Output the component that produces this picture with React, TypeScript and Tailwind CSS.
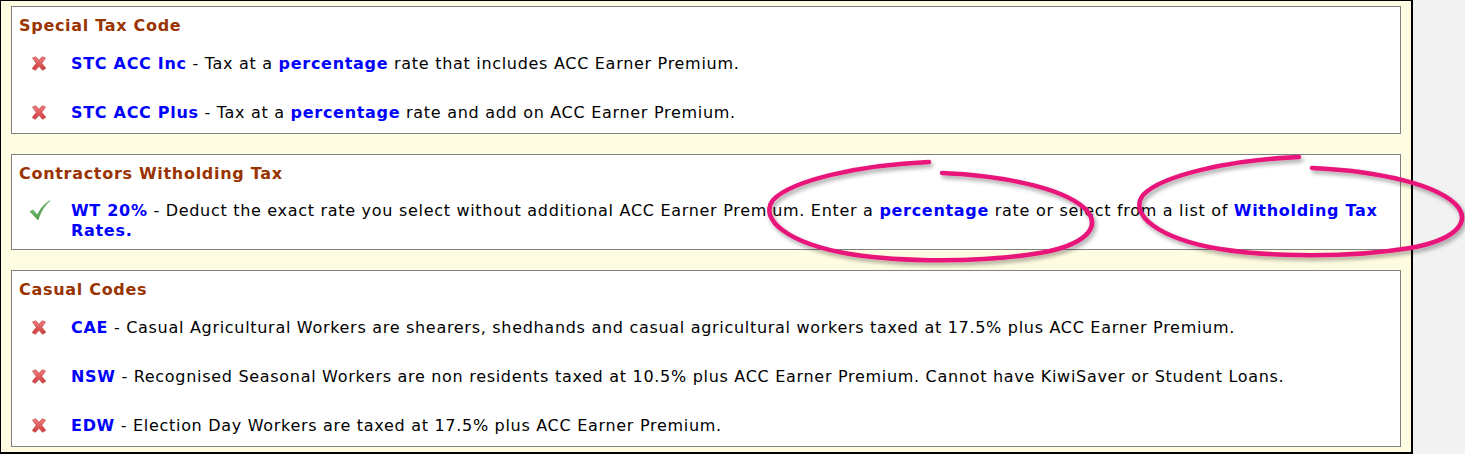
import React from "react";

const font = { fontFamily: '"DejaVu Sans", Verdana, sans-serif' };

function XIcon() {
  return (
    <svg width="16" height="15" viewBox="0 0 16 15">
      <defs>
        <linearGradient id="xg" x1="0" y1="0" x2="0" y2="1">
          <stop offset="0" stopColor="#f27f7f" />
          <stop offset="1" stopColor="#cc3c3c" />
        </linearGradient>
      </defs>
      <path
        d="M1.5 2 L4.8 0.8 L8 4.2 L11.2 0.8 L14.5 2 L10.8 7.3 L14.8 12.3 L11.6 14.3 L8 10.3 L4.4 14.3 L1.2 12.6 L5.2 7.3 Z"
        fill="url(#xg)"
        stroke="#b83434"
        strokeWidth="0.6"
        strokeLinejoin="round"
      />
    </svg>
  );
}

function CheckIcon() {
  return (
    <svg width="22" height="21" viewBox="0 0 22 21">
      <defs>
        <linearGradient id="cg" x1="0" y1="0" x2="1" y2="1">
          <stop offset="0" stopColor="#8fd08a" />
          <stop offset="1" stopColor="#2f8a2f" />
        </linearGradient>
      </defs>
      <path
        d="M1 11.5 L4 10 L8.5 15 C11 9 15 4 21 0.5 C16 5 12 11 9 20 Z"
        fill="url(#cg)"
        stroke="#3d8b3d"
        strokeWidth="0.5"
        strokeLinejoin="round"
      />
    </svg>
  );
}

function Row({ ok, children, className = "" }: { ok?: boolean; children: React.ReactNode; className?: string }) {
  return (
    <div className={"flex " + className}>
      <div className="w-[52px] shrink-0 flex">
        {ok ? (
          <div className="ml-[10px] -mt-[1px]">
            <CheckIcon />
          </div>
        ) : (
          <div className="ml-[12px] mt-[2px]">
            <XIcon />
          </div>
        )}
      </div>
      <p className="pr-[10px]">{children}</p>
    </div>
  );
}

const B = ({ children }: { children: React.ReactNode }) => (
  <b className="font-bold text-[#0000ff]">{children}</b>
);

function Heading({ children }: { children: React.ReactNode }) {
  return <div className="font-bold text-[#993300] leading-5">{children}</div>;
}

const circlePath =
  "M929 162 C860 165 792 180 773 200 C758 220 790 244 850 254 C900 262 980 263 1040 253 C1085 245 1100 228 1088 212 C1070 190 1010 176 942 173";

export default function App() {
  return (
    <div className="relative flex w-[1465px] h-[454px] bg-[#f2f2f2] overflow-hidden" style={font}>
      <div className="w-[1413px] h-[454px] bg-[#fffde1] border-l border-t border-r-2 border-b-2 border-black px-[10px] pt-[5px] flex flex-col gap-[20px] text-[16px] leading-5 tracking-[0.7px] text-black">
        <div className="bg-white border border-[#808080] pl-[7px] pt-[9px] h-[128px]">
          <Heading>Special Tax Code</Heading>
          <Row className="mt-[18px]">
            <B>STC ACC Inc</B> - Tax at a <B>percentage</B> rate that includes ACC Earner Premium.
          </Row>
          <Row className="mt-[29px]">
            <B>STC ACC Plus</B> - Tax at a <B>percentage</B> rate and add on ACC Earner Premium.
          </Row>
        </div>
        <div className="bg-white border border-[#808080] pl-[7px] pt-[9px] h-[96px]">
          <Heading>Contractors Witholding Tax</Heading>
          <Row ok className="mt-[17px]">
            <B>WT 20%</B> - Deduct the exact rate you select without additional ACC Earner Premium. Enter a{" "}
            <B>percentage</B> rate or select from a list of <B>Witholding Tax Rates.</B>
          </Row>
        </div>
        <div className="bg-white border border-[#808080] pl-[7px] pt-[9px] h-[177px]">
          <Heading>Casual Codes</Heading>
          <Row className="mt-[18px]">
            <B>CAE</B> - Casual Agricultural Workers are shearers, shedhands and casual agricultural workers taxed at 17.5% plus ACC Earner Premium.
          </Row>
          <Row className="mt-[29px]">
            <B>NSW</B> - Recognised Seasonal Workers are non residents taxed at 10.5% plus ACC Earner Premium. Cannot have KiwiSaver or Student Loans.
          </Row>
          <Row className="mt-[29px]">
            <B>EDW</B> - Election Day Workers are taxed at 17.5% plus ACC Earner Premium.
          </Row>
        </div>
      </div>
      <svg className="absolute left-0 top-0 pointer-events-none" width="1465" height="454" viewBox="0 0 1465 454">
        <defs>
          <filter id="sh" x="-10%" y="-10%" width="120%" height="130%">
            <feDropShadow dx="2" dy="3" stdDeviation="2" floodColor="#000" floodOpacity="0.35" />
          </filter>
        </defs>
        <g filter="url(#sh)" fill="none" stroke="#e8147a" strokeWidth="4.5" strokeLinecap="round">
          <path d={circlePath} />
          <path d={circlePath} transform="translate(370 -5)" />
        </g>
      </svg>
    </div>
  );
}
